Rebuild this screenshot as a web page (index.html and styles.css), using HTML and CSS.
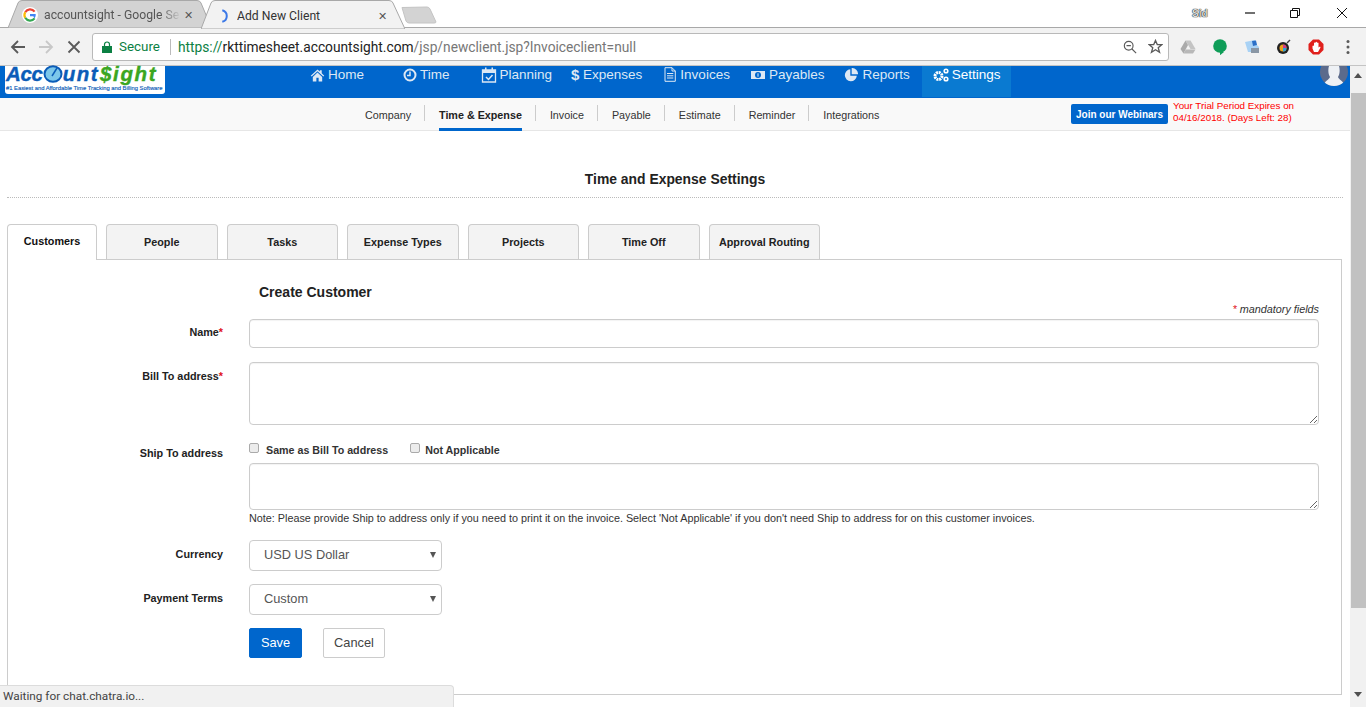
FILE: index.html
```html
<!DOCTYPE html>
<html lang="en">
<head>
<meta charset="utf-8">
<title>Add New Client</title>
<link rel="stylesheet" href="styles.css">
</head>
<body>
<header class="browser">
  <div class="tabstrip">
    <div class="btab btab-off">
      <svg class="btab-bg" viewBox="0 0 204 28" preserveAspectRatio="none"><path d="M3 28 L13 3 Q14 .5 17 .5 L192 .5 Q195 .5 196 3 L204 22 L204 28 Z" fill="#d3d3d3" stroke="#a8a8a8"/></svg>
      <svg class="favicon" viewBox="0 0 16 16"><circle cx="8" cy="8" r="8" fill="#fff"/><path d="M12.6 4.6A5.7 5.7 0 0 0 3.2 5.2" fill="none" stroke="#ea4335" stroke-width="2.2"/><path d="M3.2 5.2a5.7 5.7 0 0 0 0 5.6" fill="none" stroke="#fbbc05" stroke-width="2.2"/><path d="M3.2 10.8a5.7 5.7 0 0 0 9.4.6" fill="none" stroke="#34a853" stroke-width="2.2"/><path d="M12.6 11.4A5.7 5.7 0 0 0 13.7 7H8v2.2h3.3" fill="#4285f4"/></svg>
      <span class="btab-title">accountsight - Google Se</span>
      <span class="btab-x">✕</span>
    </div>
    <div class="btab btab-on">
      <svg class="btab-bg" viewBox="0 0 204 29" preserveAspectRatio="none"><path d="M0 29 L10 3 Q11 .5 14 .5 L188 .5 Q191 .5 192 3 L204 29 Z" fill="#f2f2f2" stroke="#a8a8a8"/></svg>
      <svg class="favicon" viewBox="0 0 16 16"><path d="M6.300 2.200A6 6 0 0 1 6.300 13.800" fill="none" stroke="#3b78e7" stroke-width="2"/></svg>
      <span class="btab-title">Add New Client</span>
      <span class="btab-x">✕</span>
    </div>
    <svg class="newtab" viewBox="0 0 36 18"><path d="M1 1.500 L26 1 Q28 1 29 3 L35 16 Q35 17 33 17 L8 17 Q6 17 5 15 Z" fill="#d3d3d3" stroke="#c4c4c4"/></svg>
    <div class="winctl">
      <span class="user">Sid</span>
      <svg class="win-min" viewBox="0 0 12 12"><path d="M1 6H11" stroke="#111" stroke-width="1.200"/></svg>
      <svg class="win-max" viewBox="0 0 12 12"><path d="M1.500 3.500H8.500V10.500H1.500ZM3.500 3.500V1.500H10.500V8.500H8.500" fill="none" stroke="#111"/></svg>
      <svg class="win-close" viewBox="0 0 12 12"><path d="M1 1L11 11M11 1L1 11" stroke="#111"/></svg>
    </div>
  </div>
  <div class="toolbar">
    <svg class="tb-ico" viewBox="0 0 16 16"><path d="M15 8H2M8 2L2 8L8 14" fill="none" stroke="#5a5a5a" stroke-width="1.800"/></svg>
    <svg class="tb-ico" viewBox="0 0 16 16"><path d="M1 8H14M8 2L14 8L8 14" fill="none" stroke="#c8c8c8" stroke-width="1.800"/></svg>
    <svg class="tb-ico" viewBox="0 0 16 16"><path d="M2.500 2.500L13.500 13.500M13.500 2.500L2.500 13.500" fill="none" stroke="#5a5a5a" stroke-width="1.800"/></svg>
    <div class="omnibox">
      <svg class="lock" viewBox="0 0 10 12"><path d="M2.500 5V3.500a2.500 2.500 0 0 1 5 0V5" fill="none" stroke="#0b8043" stroke-width="1.200"/><rect y="5" width="10" height="7" fill="#0b8043"/></svg>
      <span class="secure">Secure</span>
      <span class="omni-sep"></span>
      <span class="url"><span class="url-s">https://</span><span class="url-h">rkttimesheet.accountsight.com</span><span class="url-p">/jsp/newclient.jsp?Invoiceclient=null</span></span>
      <svg class="omni-zoom" viewBox="0 0 16 16"><circle cx="6.500" cy="6.500" r="5" fill="none" stroke="#5a5a5a" stroke-width="1.300"/><path d="M4 6.500H9M10 10L15 15" stroke="#5a5a5a" stroke-width="1.300"/></svg>
      <svg class="omni-star" viewBox="0 0 16 16"><path d="M8 1.500L9.900 6H14.800L10.900 9.200L12.300 14.200L8 11.400L3.700 14.200L5.100 9.200L1.200 6H6.100Z" fill="none" stroke="#5a5a5a" stroke-width="1.400"/></svg>
    </div>
    <div class="exts">
      <svg class="ext" viewBox="0 0 16 16"><path d="M5.500 1.500H10.500L15.500 10H10.500Z" fill="#c4c4c4"/><path d="M5.500 1.500L8 6L3.500 14.500L.5 10Z" fill="#aaa"/><path d="M5.800 10.500H15.500L13 14.500H3.500Z" fill="#b8b8b8"/></svg>
      <svg class="ext" viewBox="0 0 16 16"><circle cx="8" cy="7" r="6.800" fill="#0f9d58"/><path d="M8 13V16.200L12 13Z" fill="#0f9d58"/></svg>
      <svg class="ext" viewBox="0 0 16 16"><path d="M1 3L11 1L13 6L15 8V13H4Z" fill="#a9d2f5"/><path d="M8 2L12 1.500L13 6L9 7Z" fill="#2b6fc7"/><rect x="7" y="9" width="8" height="5" fill="#8a97a5"/></svg>
      <svg class="ext" viewBox="0 0 16 16"><circle cx="7" cy="9" r="6" fill="#222"/><circle cx="7" cy="9" r="3.500" fill="#e9a31d"/><path d="M7 5.500A3.500 3.500 0 0 1 10.500 9H7Z" fill="#d13c8a"/><path d="M7 9H10.500A3.500 3.500 0 0 1 7 12.500Z" fill="#30a3d9"/><path d="M11 4L14 1" stroke="#444" stroke-width="1.500"/></svg>
      <svg class="ext" viewBox="0 0 16 16"><path d="M5 .5H11L15.500 5V11L11 15.500H5L.5 11V5Z" fill="#e0201c"/><path d="M4.500 9.500V7a.8.8 0 0 1 1.500 0V4a.8.8 0 0 1 1.500 0V3.200a.8.8 0 0 1 1.500 0V4a.8.8 0 0 1 1.500 0V8.500L12 7.500L12.500 8.500L10 13H6Z" fill="#fff"/></svg>
      <svg class="ext-menu" viewBox="0 0 4 16"><circle cx="2" cy="2.500" r="1.500" fill="#5a5a5a"/><circle cx="2" cy="8" r="1.500" fill="#5a5a5a"/><circle cx="2" cy="13.500" r="1.500" fill="#5a5a5a"/></svg>
    </div>
  </div>
</header>

<div class="viewport">
  <div class="page">
    <nav class="topnav">
      <div class="logo">
        <div class="logo-word"><span class="logo-acc">Acc</span><svg class="logo-clock" viewBox="0 0 20 18"><ellipse cx="10" cy="9" rx="8.500" ry="7.800" fill="#7cc7ea" stroke="#0b5cb8" stroke-width="2"/><path d="M9 11L14 3" stroke="#0b5cb8" stroke-width="1.500"/></svg><span class="logo-unt">unt</span><span class="logo-green">$ight</span></div>
        <div class="logo-tag">#1 Easiest and Affordable Time Tracking and Billing Software</div>
      </div>
      <div class="navitems">
        <a class="navitem nav-home"><svg class="nav-ico" viewBox="0 0 16 14"><path d="M8 1L.8 7.700L1.800 8.700L8 3L14.200 8.700L15.200 7.700L12.500 5.200V2H10.500V3.300ZM3 9V14H6.800V10H9.200V14H13V9L8 4.300Z" fill="currentColor"/></svg>Home</a>
        <a class="navitem nav-time"><svg class="nav-ico" viewBox="0 0 14 14"><circle cx="7" cy="7" r="5.500" fill="none" stroke="currentColor" stroke-width="2"/><path d="M7 3.500V7.500H4" fill="none" stroke="currentColor" stroke-width="1.500"/></svg>Time</a>
        <a class="navitem nav-plan"><svg class="nav-ico nav-ico-l" viewBox="0 0 16 16"><path d="M1.500 3H14.500V15H1.500Z" fill="none" stroke="currentColor" stroke-width="1.300"/><path d="M1.500 3H14.500V6H1.500ZM4 .5H5.500V3H4ZM10.500 .5H12V3H10.500Z" fill="currentColor"/><path d="M5 10L7.500 12.500L11.500 8" fill="none" stroke="currentColor" stroke-width="1.500"/></svg>Planning</a>
        <a class="navitem nav-exp"><span class="nav-dollar">$</span>Expenses</a>
        <a class="navitem nav-inv"><svg class="nav-ico nav-ico-s" viewBox="0 0 12 15"><path d="M1 .7H8L11.300 4V14.300H1ZM8 .7V4H11.300M3 6.500H9.300M3 8.800H9.300M3 11H9.300" fill="none" stroke="currentColor"/></svg>Invoices</a>
        <a class="navitem nav-pay"><svg class="nav-ico nav-ico-l" viewBox="0 0 16 12"><path d="M1 2H15V10H1Z" fill="currentColor"/><circle cx="8" cy="6" r="3" fill="#0066cc"/><path d="M8 4.300V7.700" stroke="currentColor"/></svg>Payables</a>
        <a class="navitem nav-rep"><svg class="nav-ico" viewBox="0 0 14 14"><path d="M6.300 1.200A6 6 0 1 0 12.800 7.700H6.300Z" fill="currentColor"/><path d="M7.700 0A6 6 0 0 1 14 6.300H7.700Z" fill="currentColor"/></svg>Reports</a>
        <a class="navitem nav-set"><svg class="nav-ico nav-ico-l" viewBox="0 0 16 14"><circle cx="5.500" cy="8" r="3.500" fill="none" stroke="currentColor" stroke-width="3" stroke-dasharray="2 .7"/><circle cx="13" cy="3" r="1.800" fill="none" stroke="currentColor" stroke-width="1.600"/><circle cx="13" cy="11" r="1.800" fill="none" stroke="currentColor" stroke-width="1.600"/></svg>Settings</a>
      </div>
      <div class="avatar"><svg viewBox="0 0 28 20"><clipPath id="avatar-clip"><circle cx="14" cy="6" r="14"/></clipPath><g clip-path="url(#avatar-clip)"><rect width="28" height="20" fill="#5c6b8c"/><path d="M2 22C4 15 9 14 10 11C8 8 8 3 9 0H19C20 3 20 8 18 11C19 14 24 15 26 22Z" fill="#eef1f5"/></g></svg></div>
    </nav>

    <div class="subnav">
      <ul class="sublinks">
        <li class="sublink">Company</li>
        <li class="sublink sublink-on">Time &amp; Expense</li>
        <li class="sublink">Invoice</li>
        <li class="sublink">Payable</li>
        <li class="sublink">Estimate</li>
        <li class="sublink">Reminder</li>
        <li class="sublink sublink-last">Integrations</li>
      </ul>
      <a class="webinar">Join our Webinars</a>
      <p class="trial">Your Trial Period Expires on<br>04/16/2018. (Days Left: 28)</p>
    </div>

    <h1 class="pagetitle">Time and Expense Settings</h1>

    <div class="tabs">
      <div class="tab tab-on">Customers</div>
      <div class="tab">People</div>
      <div class="tab">Tasks</div>
      <div class="tab">Expense Types</div>
      <div class="tab">Projects</div>
      <div class="tab">Time Off</div>
      <div class="tab">Approval Routing</div>
    </div>

    <section class="panel">
      <div class="form">
        <span></span>
        <h2 class="formtitle">Create Customer</h2>
        <span></span>
        <p class="mandatory"><span class="req">*</span> mandatory fields</p>

        <label class="lab lab-name">Name<span class="req">*</span></label>
        <input class="ctl ctl-text" type="text">

        <label class="lab lab-bill">Bill To address<span class="req">*</span></label>
        <textarea class="ctl ctl-bill"></textarea>

        <label class="lab lab-ship">Ship To address</label>
        <div class="shipfield">
          <div class="checks">
            <label class="chk"><input type="checkbox">Same as Bill To address</label>
            <label class="chk"><input type="checkbox">Not Applicable</label>
          </div>
          <textarea class="ctl ctl-ship"></textarea>
          <p class="note">Note: Please provide Ship to address only if you need to print it on the invoice. Select 'Not Applicable' if you don't need Ship to address for on this customer invoices.</p>
        </div>

        <label class="lab lab-sel lab-cur">Currency</label>
        <div class="selwrap sel-cur"><select class="ctl ctl-sel"><option>USD US Dollar</option></select></div>

        <label class="lab lab-sel lab-terms">Payment Terms</label>
        <div class="selwrap sel-terms"><select class="ctl ctl-sel"><option>Custom</option></select></div>

        <span></span>
        <div class="actions">
          <button class="btn btn-save" type="button">Save</button>
          <button class="btn btn-cancel" type="button">Cancel</button>
        </div>
      </div>
    </section>
  </div>
  <div class="scrollbar">
    <span class="sb-up"></span>
    <span class="sb-thumb"></span>
    <span class="sb-down"></span>
  </div>
  <div class="status">Waiting for chat.chatra.io...</div>
</div>
</body>
</html>
```

FILE: styles.css
```css
* { box-sizing: border-box; }
html, body { margin: 0; height: 707px; overflow: hidden; background: #fff; }
body { font-family: "Liberation Sans", Arial, sans-serif; color: #222; }

/* browser chrome */
.browser { height: 66px; font-family: "Open Sans", "Noto Sans", sans-serif; }
.tabstrip { height: 28px; display: flex; align-items: flex-start; padding-left: 5px; background: #fff; border-bottom: 1px solid #a8a8a8; }
.btab { position: relative; width: 204px; height: 28px; margin-right: -8px; display: flex; align-items: center; padding: 2px 16px 0 17px; font-size: 12px; }
.btab-bg { position: absolute; inset: 0; width: 100%; height: 100%; }
.btab-on { z-index: 1; color: #333; height: 29px; padding-left: 15px; padding-right: 18px; }
.btab-off { color: #555; }
.favicon { position: relative; width: 16px; height: 16px; margin-right: 6px; flex: none; }
.btab-on .favicon { margin-right: 5px; }
.btab-title { position: relative; flex: 1; min-width: 0; white-space: nowrap; overflow: hidden; font-family: "Roboto", sans-serif; font-size: 12.200px; }
.btab-off .btab-title { -webkit-mask-image: linear-gradient(90deg, #000 85%, transparent); mask-image: linear-gradient(90deg, #000 85%, transparent); }
.btab-x { position: relative; font-size: 11px; line-height: 14px; color: #555; flex: none; margin-left: 3px; }
.newtab { width: 36px; height: 18px; margin: 6px 0 0 4px; flex: none; position: relative; z-index: 1; }
.winctl { margin-left: auto; display: flex; align-items: center; height: 26px; }
.user { width: 16px; margin-right: 36px; font-size: 10px; font-weight: 700; color: #ddd; text-shadow: 0 0 1px #000, 0 0 1px #000; font-family: "Liberation Sans", sans-serif; }
.win-min, .win-max, .win-close { width: 12px; height: 12px; }
.win-min { margin-right: 33px; }
.win-max { margin-right: 35px; }
.win-close { margin-right: 18px; }

.toolbar { height: 38px; background: #f2f2f2; display: flex; align-items: center; padding: 0 9px 0 10px; border-bottom: 1px solid #c4c4c4; }
.tb-ico { width: 16px; height: 16px; margin-right: 12px; flex: none; }
.tb-ico + .tb-ico + .tb-ico { margin-right: 10px; }
.omnibox { width: 1077px; height: 28px; background: #fff; border: 1px solid #b9b9b9; border-radius: 3px; display: flex; align-items: center; padding: 0 5px 0 9px; flex: none; }
.lock { width: 10px; height: 12px; margin-right: 7px; flex: none; }
.secure { color: #0b8043; font-family: "Roboto", sans-serif; font-size: 13.400px; }
.omni-sep { width: 1px; height: 16px; background: #bbb; margin: 0 7px 0 10px; flex: none; }
.url { font-family: "Roboto", sans-serif; font-size: 13.750px; flex: 1; white-space: nowrap; }
.url-s { color: #0b8043; }
.url-h { color: #222; }
.url-p { color: #777; }
.omni-zoom { width: 14px; height: 14px; margin-right: 11px; flex: none; }
.omni-star { width: 15px; height: 15px; flex: none; }
.exts { display: flex; align-items: center; padding-left: 11px; flex: 1; }
.ext { width: 16px; height: 16px; margin-right: 16px; flex: none; }
.ext-menu { width: 4px; height: 16px; margin-left: 6px; flex: none; }

/* viewport */
.viewport { position: relative; display: flex; height: 641px; }
.page { width: 1350px; flex: none; }
.scrollbar { width: 16px; background: #f1f1f1; display: flex; flex-direction: column; align-items: center; }
.sb-up { width: 0; height: 0; margin-top: 7px; border: 4px solid transparent; border-top: 0; border-bottom: 5px solid #505050; }
.sb-thumb { width: 15px; height: 515px; margin-top: 15px; background: #c1c1c1; }
.sb-down { width: 0; height: 0; margin-top: 84px; border: 4px solid transparent; border-bottom: 0; border-top: 5px solid #505050; }
.status { position: absolute; left: 0; bottom: 0; width: 454px; height: 22px; background: #f1f1f1; border: 1px solid #dcdcdc; border-left: 0; border-bottom: 0; border-top-right-radius: 4px; padding: 2px 0 0 3px; font-size: 11.800px; line-height: 16px; font-family: "Roboto", sans-serif; color: #444; }

/* site nav */
.topnav { height: 32px; background: #0066cc; display: flex; color: #dde8f4; font-size: 13.500px; }
.logo { width: 160px; height: 28px; margin-left: 5px; background: #fff; border-radius: 0 0 3px 3px; flex: none; padding: 0 0 0 1px; }
.logo-word { display: flex; align-items: center; height: 19px; margin-top: -2px; font: italic 700 20.500px/19px "Liberation Sans", sans-serif; -webkit-text-stroke: .4px; }
.logo-acc { color: #0b5cb8; letter-spacing: -.3px; }
.logo-unt { color: #0b5cb8; letter-spacing: 1.500px; }
.logo-green { color: #3aa621; letter-spacing: 1.600px; margin-left: 1px; }
.logo-clock { width: 20px; height: 18px; flex: none; }
.logo-tag { font: 400 5.800px/7px "Liberation Sans", sans-serif; color: #0b5cb8; white-space: nowrap; -webkit-text-stroke: .15px; margin-top: 2px; }
.navitems { display: flex; margin-left: 134px; height: 31px; }
.navitem { display: flex; align-items: flex-start; line-height: 17px; white-space: nowrap; }
.nav-ico { width: 14px; height: 14px; margin: 2px 3px 0 0; flex: none; }
.nav-home .nav-ico { width: 15px; }
.nav-ico-l { width: 16px; height: 16px; margin: 1px 3px 0 0; }
.nav-ico-s { width: 12px; height: 15px; margin: 1px 4px 0 0; }
.nav-rep .nav-ico { margin-right: 4px; }
.nav-dollar { font-weight: 700; font-size: 15px; margin-right: 4px; width: 8px; }
.nav-home { margin-left: 11px; }
.nav-time { margin-left: 39px; }
.nav-plan { margin-left: 31px; }
.nav-exp { margin-left: 19px; }
.nav-inv { margin-left: 22px; }
.nav-pay { margin-left: 20px; }
.nav-rep { margin-left: 20px; }
.nav-set { margin-left: 12px; padding: 0 10px 0 11px; background: #0a7ad1; color: #fff; height: 31px; }
.avatar { width: 28px; height: 20px; margin-left: auto; margin-right: 2px; flex: none; }
.avatar svg { display: block; width: 28px; height: 20px; }

/* sub nav */
.subnav { height: 33px; background: #f9f9f9; border-bottom: 1px solid #e6e6e6; display: flex; position: relative; }
.sublinks { display: flex; list-style: none; margin: 0 0 0 351px; padding: 0; height: 33px; }
.sublink { position: relative; padding: 1px 13px 0 14px; height: 16px; margin-top: 7px; line-height: 18px; font-size: 10.750px; color: #333; border-right: 1px solid #ccc; white-space: nowrap; }
.sublink-last { border-right: 0; }
.sublink-on { font-weight: 700; color: #222; }
.sublink-on::after { content: ""; position: absolute; left: 14px; right: 13px; top: 23px; height: 3px; background: #0066cc; }
.webinar { margin: 6px 0 0 auto; width: 97px; height: 20px; background: #0066cc; color: #fff; border-radius: 2px; font-size: 10px; font-weight: 700; line-height: 21px; text-align: center; white-space: nowrap; flex: none; }
.trial { margin: 2px 0 0 5px; width: 177px; flex: none; font-size: 9.800px; line-height: 12px; color: #f00; }

.pagetitle { margin: 40px 7px 0; height: 27px; border-bottom: 1px dotted #bbb; text-align: center; font-size: 13.900px; line-height: 16px; font-weight: 700; color: #222; }

/* tabs */
.tabs { display: flex; gap: 9px; margin: 26px 0 0 7px; height: 35px; position: relative; z-index: 1; }
.tab { width: 111.500px; height: 35px; background: #f3f3f3; border: 1px solid #ccc; border-bottom: 0; border-radius: 4px 4px 0 0; text-align: center; font-size: 10.800px; font-weight: 700; line-height: 34px; color: #222; }
.tab-on { width: 90px; height: 36px; background: #fff; line-height: 32px; color: #111; }

.panel { margin: 0 8px 0 7px; height: 436px; border: 1px solid #ccc; padding: 24px 22px 0 0; }
.form { display: grid; grid-template-columns: 215px 1fr; column-gap: 26px; align-items: start; }
.formtitle { margin: 0 0 0 10px; font-size: 14px; line-height: 16px; font-weight: 700; color: #222; }
.mandatory { margin: 3px 0 4px; height: 12px; text-align: right; font-size: 10.800px; line-height: 12px; font-style: italic; color: #333; }
.req { color: #e0101a; }
.lab { text-align: right; font-size: 10.800px; font-weight: 700; line-height: 14px; color: #222; }
.lab-name { padding-top: 6px; }
.lab-bill { margin-top: 14px; padding-top: 7px; }
.lab-ship { margin-top: 21px; }
.lab-sel { padding-top: 7px; }
.lab-cur { margin-top: 0; }
.lab-terms { margin-top: 13px; }
.ctl { display: block; width: 100%; background: #fff; border: 1px solid #ccc; border-radius: 4px; font-family: "Liberation Sans", sans-serif; box-shadow: inset 0 1px 1px rgba(0,0,0,.05); margin: 0; }
.ctl-text { height: 29px; }
.ctl-bill { height: 63px; margin-top: 14px; }
.shipfield { margin-top: 16px; }
.checks { display: flex; height: 16px; line-height: 16px; }
.chk { display: flex; align-items: center; padding-top: 2px; font-size: 10.700px; font-weight: 700; color: #333; margin-right: 22px; }
.chk input { appearance: none; -webkit-appearance: none; width: 10px; height: 10px; margin: 0 7px 0 0; position: relative; top: -2px; background: #ececec; border: 1px solid #aaa; border-radius: 2px; }
.chk + .chk input { margin-right: 5px; }
.ctl-ship { height: 47px; margin-top: 6px; }
.note { margin: 2px 0 16px; font-size: 10.800px; line-height: 12px; color: #333; white-space: nowrap; }
.selwrap { position: relative; width: 193px; }
.selwrap::after { content: ""; position: absolute; right: 6px; top: 12px; border: 3.500px solid transparent; border-bottom: 0; border-top: 6px solid #555; pointer-events: none; }
.sel-terms { margin-top: 13px; }
.ctl-sel { height: 31px; appearance: none; -webkit-appearance: none; padding: 0 0 2px 14px; font-size: 12.800px; color: #555; box-shadow: none; }
.actions { display: flex; margin-top: 13px; }
.btn { height: 30px; border-radius: 2px; font-family: "Liberation Sans", sans-serif; font-size: 12.800px; padding: 0 0 2px; }
.btn-save { width: 53px; background: #0066cc; border: 1px solid #0066cc; color: #fff; }
.btn-cancel { width: 62px; margin-left: 21px; background: #fff; border: 1px solid #ccc; color: #444; }
```
